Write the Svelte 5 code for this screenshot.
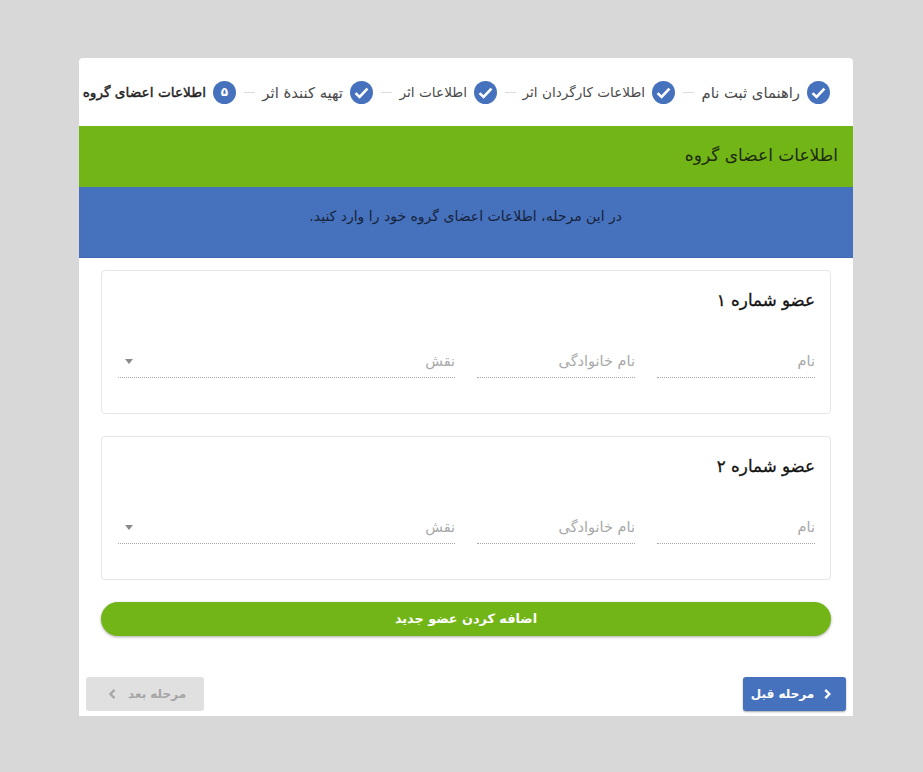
<script>
  const steps = [
    { label: "راهنمای ثبت نام", width: 99, size: 14.8 },
    { label: "اطلاعات کارگردان اثر", width: 122, size: 13.6 },
    { label: "اطلاعات اثر", width: 68, size: 13.7 },
    { label: "تهیه کنندهٔ اثر", width: 81, size: 14.8 },
    { label: "اطلاعات اعضای گروه", width: 123, size: 13.7, active: true }
  ];
  const members = ["عضو شماره ۱", "عضو شماره ۲"];
</script>

<main class="page">
  <div class="panel">
    <ol class="stepper">
      {#each steps as step, i}
        {#if i > 0}<li class="line"></li>{/if}
        <li class="step" class:active={step.active}>
          <span class="dot">
            {#if step.active}
              ۵
            {:else}
              <svg viewBox="0 0 24 24" width="23" height="23">
                <path d="M5.800 12.600l4.200 4.100 8.200-8.700" fill="none" stroke="#fff" stroke-width="2.700" />
              </svg>
            {/if}
          </span>
          <span class="step-label" style="width: {step.width}px; font-size: {step.size}px">{step.label}</span>
        </li>
      {/each}
    </ol>

    <h2 class="banner">اطلاعات اعضای گروه</h2>
    <p class="hint">در این مرحله، اطلاعات اعضای گروه خود را وارد کنید.</p>

    <section class="members">
      {#each members as title}
        <div class="card">
          <h3>{title}</h3>
          <div class="fields">
            <div class="field">نام</div>
            <div class="field">نام خانوادگی</div>
            <div class="field select">
              <span>نقش</span>
              <i class="caret"></i>
            </div>
          </div>
        </div>
      {/each}
      <button class="add">اضافه کردن عضو جدید</button>
    </section>

    <footer class="actions">
      <button class="nav prev">
        <svg viewBox="0 0 24 24" width="18" height="18">
          <path d="M7 6.500l5.500 5.500L7 17.500" fill="none" stroke="currentColor" stroke-width="3" />
        </svg>
        مرحله قبل
      </button>
      <button class="nav next" disabled>
        مرحله بعد
        <svg viewBox="0 0 24 24" width="18" height="18">
          <path d="M14 6.500L8.500 12l5.500 5.500" fill="none" stroke="currentColor" stroke-width="3" />
        </svg>
      </button>
    </footer>
  </div>
</main>

<style>
  :global(body) {
    margin: 0;
    background: #d8d8d8;
  }

  .page {
    height: 772px;
    padding: 58px 70px 0 79px;
    box-sizing: border-box;
    font-family: "DejaVu Sans", "Noto Sans", sans-serif;
    direction: rtl;
  }

  .panel {
    width: 774px;
    height: 658px;
    background: #fff;
    border-radius: 4px 4px 0 0;
  }

  .stepper {
    display: flex;
    align-items: center;
    height: 68px;
    margin: 0;
    padding: 0 23px 0 0;
    list-style: none;
  }

  .step {
    display: flex;
    align-items: center;
    gap: 7px;
    flex: none;
  }

  .dot {
    display: flex;
    align-items: center;
    justify-content: center;
    width: 23px;
    height: 23px;
    border-radius: 50%;
    background: #4672bd;
    color: #fff;
    font-size: 12px;
    font-weight: 700;
  }

  .step-label {
    color: #4a4a4a;
    white-space: nowrap;
  }

  .active .step-label {
    color: #222;
    -webkit-text-stroke: 0.4px #222;
  }

  .line {
    flex: none;
    width: 11px;
    height: 1px;
    margin: 0 7px 0 8px;
    background: #dcdcdc;
  }

  .banner {
    display: flex;
    align-items: center;
    height: 61px;
    margin: 0;
    padding: 0 15px 3px;
    box-sizing: border-box;
    background: #72b516;
    color: #1d2a12;
    font-size: 17px;
    font-weight: 400;
  }

  .hint {
    height: 71px;
    margin: 0;
    padding: 21px 231px 0 0;
    box-sizing: border-box;
    background: #4672bd;
    border-bottom: 1px solid #3f69b3;
    color: #16233c;
    font-size: 14px;
  }

  .members {
    display: flex;
    flex-direction: column;
    gap: 22px;
    padding: 12px 22px 0;
  }

  .card {
    height: 144px;
    padding: 0 15px 0 16px;
    box-sizing: border-box;
    border: 1px solid #e6e6e6;
    border-radius: 4px;
  }

  h3 {
    margin: 0;
    padding-top: 19px;
    height: 62px;
    box-sizing: border-box;
    font-size: 16.700px;
    font-weight: 400;
    color: #111;
    -webkit-text-stroke: 0.3px #111;
  }

  .fields {
    display: grid;
    grid-template-columns: 158px 158px 1fr;
    gap: 22px;
    margin-top: 15px;
  }

  .field {
    display: flex;
    align-items: center;
    justify-content: space-between;
    height: 30px;
    padding-bottom: 3px;
    box-sizing: border-box;
    border-bottom: 1px dotted #a8a8a8;
    color: #a9a9a9;
    font-size: 14.500px;
  }

  .caret {
    width: 0;
    height: 0;
    margin-left: 7px;
    border-top: 5px solid #8a8a8a;
    border-left: 4px solid transparent;
    border-right: 4px solid transparent;
  }

  button {
    font-family: inherit;
    border: none;
    cursor: pointer;
  }

  .add {
    height: 34px;
    padding: 0 0 2px;
    border-radius: 17px;
    background: #72b516;
    color: #fff;
    font-size: 12.800px;
    font-weight: 700;
    box-shadow: 0 1px 3px rgb(0 0 0 / 0.35);
  }

  .actions {
    display: flex;
    justify-content: space-between;
    align-items: center;
    padding: 41px 7px 0;
  }

  .nav {
    display: flex;
    align-items: center;
    justify-content: center;
    gap: 6px;
    height: 34px;
    padding: 0;
    border-radius: 3px;
    font-size: 12px;
    font-weight: 700;
  }

  .prev {
    width: 103px;
    background: #4672bd;
    color: #fff;
    box-shadow: 0 1px 2px rgb(0 0 0 / 0.35);
  }

  .next {
    width: 118px;
    background: #e0e0e0;
    color: #a6a6a6;
  }
</style>
